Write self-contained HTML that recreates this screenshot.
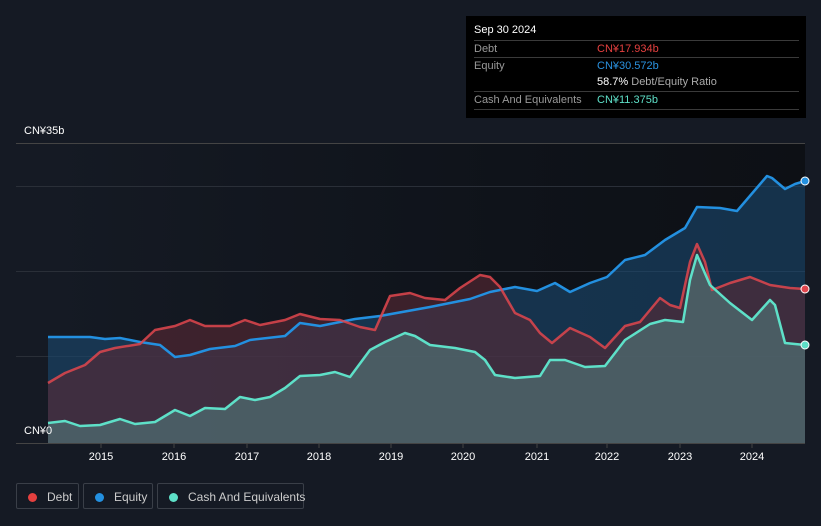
<!DOCTYPE html>
<html><head><meta charset="utf-8"><style>
html,body{margin:0;width:821px;height:526px;background:#151a24;font-family:"Liberation Sans",sans-serif;overflow:hidden;position:relative}
.tip{position:absolute;left:466px;top:16px;width:340px;height:102px;background:#000;color:#fff;font-size:11px}
.tip .row{position:absolute;left:8px;width:325px;border-top:1px solid #3a3a3a;height:17px;line-height:17px;color:#999}
.tip b{font-weight:normal;position:absolute;left:123px}
.leg{position:absolute;top:483px;height:26px;border:1px solid #3a3f48;border-radius:2px;color:#ccc;font-size:12px;line-height:26px;box-sizing:border-box;white-space:nowrap}
.leg i{display:inline-block;width:9px;height:9px;border-radius:50%;margin:0 10px 0 11px;vertical-align:-1px}
.ax{position:absolute;color:#fff;font-size:11px}
</style></head><body>
<svg width="821" height="526" style="position:absolute;left:0;top:0">
<defs><linearGradient id="bg" x1="0" x2="1"><stop offset="0" stop-color="#151a24"/><stop offset="0.6" stop-color="#0f131a"/><stop offset="1" stop-color="#0d1015"/></linearGradient></defs>
<rect x="48" y="143" width="757" height="300" fill="url(#bg)"/>
<g stroke="#2a2f38" stroke-width="1"><line x1="16" y1="143.5" x2="805" y2="143.5" stroke="#444"/><line x1="16" y1="186.5" x2="805" y2="186.5"/><line x1="16" y1="271.5" x2="805" y2="271.5"/><line x1="16" y1="356.5" x2="805" y2="356.5"/><line x1="16" y1="443.5" x2="805" y2="443.5" stroke="#444"/></g>
<polygon fill="#1b4a70" fill-opacity="0.6" points="48,337 90,337 105,339 120,338 140,342 160,345 175,357 190,355 210,349 235,346 250,340 285,336 300,323 320,326 355,319 380,316 430,307 470,299 490,292 515,287 537,291 555,283 570,292 590,283 607,277 625,260 645,255 665,240 685,228 697,207 720,208 737,211 755,190 767,176 772,178 785,189 795,184 805,181 805,443 48,443"/>
<polygon fill="#5a2a35" fill-opacity="0.6" points="48,383 65,373 85,365 100,352 115,348 140,344 155,330 175,326 190,320 205,326 230,326 245,320 260,325 285,320 300,314 320,319 340,320 360,327 375,330 390,296 410,293 425,298 445,300 460,288 480,275 490,277 500,287 515,313 530,320 540,333 552,343 570,328 590,337 605,348 625,326 640,322 660,298 670,305 680,308 690,262 697,244 705,262 712,290 730,283 750,277 770,285 790,288 805,289 805,443 48,443"/>
<polygon fill="#4f6c70" fill-opacity="0.75" points="48,423 65,421 80,426 100,425 120,419 135,424 155,422 175,410 190,416 205,408 225,409 240,397 255,400 270,397 285,388 300,376 320,375 335,372 350,377 370,350 385,342 405,333 415,336 430,345 455,348 475,352 485,360 495,375 515,378 540,376 550,360 565,360 585,367 605,366 625,340 650,324 665,320 683,322 690,280 697,255 710,285 730,303 752,320 770,300 775,305 785,343 805,345 805,443 48,443"/>
<g fill="none" stroke-width="2.5" stroke-linejoin="round">
<polyline stroke="#2390e0" points="48,337 90,337 105,339 120,338 140,342 160,345 175,357 190,355 210,349 235,346 250,340 285,336 300,323 320,326 355,319 380,316 430,307 470,299 490,292 515,287 537,291 555,283 570,292 590,283 607,277 625,260 645,255 665,240 685,228 697,207 720,208 737,211 755,190 767,176 772,178 785,189 795,184 805,181"/>
<polyline stroke="#e0464e" stroke-opacity="0.85" points="48,383 65,373 85,365 100,352 115,348 140,344 155,330 175,326 190,320 205,326 230,326 245,320 260,325 285,320 300,314 320,319 340,320 360,327 375,330 390,296 410,293 425,298 445,300 460,288 480,275 490,277 500,287 515,313 530,320 540,333 552,343 570,328 590,337 605,348 625,326 640,322 660,298 670,305 680,308 690,262 697,244 705,262 712,290 730,283 750,277 770,285 790,288 805,289"/>
<polyline stroke="#5ee0c8" points="48,423 65,421 80,426 100,425 120,419 135,424 155,422 175,410 190,416 205,408 225,409 240,397 255,400 270,397 285,388 300,376 320,375 335,372 350,377 370,350 385,342 405,333 415,336 430,345 455,348 475,352 485,360 495,375 515,378 540,376 550,360 565,360 585,367 605,366 625,340 650,324 665,320 683,322 690,280 697,255 710,285 730,303 752,320 770,300 775,305 785,343 805,345"/>
</g>
<circle cx="805" cy="181" r="4" fill="#2390e0" stroke="#fff"/><circle cx="805" cy="289" r="4" fill="#e0464e" stroke="#fff"/><circle cx="805" cy="345" r="4" fill="#5ee0c8" stroke="#fff"/>
<g stroke="#444"><line x1="101" y1="443" x2="101" y2="448"/><line x1="174" y1="443" x2="174" y2="448"/><line x1="247" y1="443" x2="247" y2="448"/><line x1="319" y1="443" x2="319" y2="448"/><line x1="391" y1="443" x2="391" y2="448"/><line x1="463" y1="443" x2="463" y2="448"/><line x1="537" y1="443" x2="537" y2="448"/><line x1="607" y1="443" x2="607" y2="448"/><line x1="680" y1="443" x2="680" y2="448"/><line x1="752" y1="443" x2="752" y2="448"/></g>
<g fill="#fff" font-size="11" text-anchor="middle" font-family="Liberation Sans"><text x="101" y="460">2015</text><text x="174" y="460">2016</text><text x="247" y="460">2017</text><text x="319" y="460">2018</text><text x="391" y="460">2019</text><text x="463" y="460">2020</text><text x="537" y="460">2021</text><text x="607" y="460">2022</text><text x="680" y="460">2023</text><text x="752" y="460">2024</text></g>
</svg>
<div class="ax" style="left:24px;top:125px">CN¥35b</div>
<div class="ax" style="left:24px;top:425px">CN¥0</div>
<div class="tip">
<div style="position:absolute;left:8px;top:8px;font-size:11px">Sep 30 2024</div>
<div class="row" style="top:24px">Debt<b style="color:#e5403f">CN¥17.934b</b></div>
<div class="row" style="top:41px">Equity<b style="color:#2a92e0">CN¥30.572b</b></div>
<div class="row" style="top:58px;border-top:none"><b style="color:#fff">58.7% <span style="color:#aaa">Debt/Equity Ratio</span></b></div>
<div class="row" style="top:75px">Cash And Equivalents<b style="color:#5ee0c8">CN¥11.375b</b></div>
<div class="row" style="top:93px;height:0"></div>
</div>
<div class="leg" style="left:16px;width:63px"><i style="background:#e5403f"></i>Debt</div>
<div class="leg" style="left:83px;width:70px"><i style="background:#2390e0"></i>Equity</div>
<div class="leg" style="left:157px;width:147px"><i style="background:#5ee0c8"></i>Cash And Equivalents</div>
</body></html>
